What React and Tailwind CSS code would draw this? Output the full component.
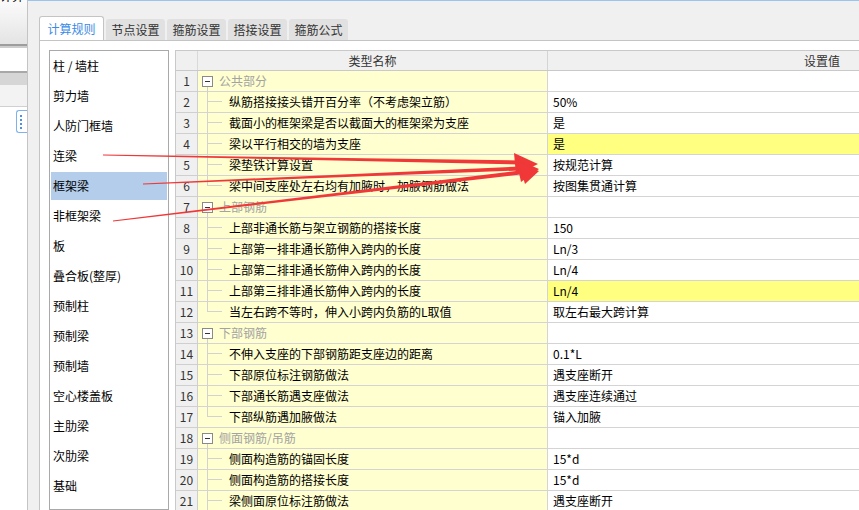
import React from "react";

const font = "font-['Noto_Sans_CJK_SC','Noto_Sans',sans-serif]";

const leftItems = [
  "柱 / 墙柱",
  "剪力墙",
  "人防门框墙",
  "连梁",
  "框架梁",
  "非框架梁",
  "板",
  "叠合板(整厚)",
  "预制柱",
  "预制梁",
  "预制墙",
  "空心楼盖板",
  "主肋梁",
  "次肋梁",
  "基础",
];

const tabs = ["计算规则", "节点设置", "箍筋设置", "搭接设置", "箍筋公式"];

// g = group row, c = child, l = last child of a group
const rows = [
  { n: 1, t: "g", name: "公共部分", value: "" },
  { n: 2, t: "c", name: "纵筋搭接接头错开百分率（不考虑架立筋）", value: "50%" },
  { n: 3, t: "c", name: "截面小的框架梁是否以截面大的框架梁为支座", value: "是" },
  { n: 4, t: "c", name: "梁以平行相交的墙为支座", value: "是", hl: true },
  { n: 5, t: "c", name: "梁垫铁计算设置", value: "按规范计算" },
  { n: 6, t: "l", name: "梁中间支座处左右均有加腋时，加腋钢筋做法", value: "按图集贯通计算" },
  { n: 7, t: "g", name: "上部钢筋", value: "" },
  { n: 8, t: "c", name: "上部非通长筋与架立钢筋的搭接长度", value: "150" },
  { n: 9, t: "c", name: "上部第一排非通长筋伸入跨内的长度", value: "Ln/3" },
  { n: 10, t: "c", name: "上部第二排非通长筋伸入跨内的长度", value: "Ln/4" },
  { n: 11, t: "c", name: "上部第三排非通长筋伸入跨内的长度", value: "Ln/4", hl: true },
  { n: 12, t: "l", name: "当左右跨不等时，伸入小跨内负筋的L取值", value: "取左右最大跨计算" },
  { n: 13, t: "g", name: "下部钢筋", value: "" },
  { n: 14, t: "c", name: "不伸入支座的下部钢筋距支座边的距离", value: "0.1*L" },
  { n: 15, t: "c", name: "下部原位标注钢筋做法", value: "遇支座断开" },
  { n: 16, t: "c", name: "下部通长筋遇支座做法", value: "遇支座连续通过" },
  { n: 17, t: "l", name: "下部纵筋遇加腋做法", value: "锚入加腋" },
  { n: 18, t: "g", name: "侧面钢筋/吊筋", value: "" },
  { n: 19, t: "c", name: "侧面构造筋的锚固长度", value: "15*d" },
  { n: 20, t: "c", name: "侧面构造筋的搭接长度", value: "15*d" },
  { n: 21, t: "c", name: "梁侧面原位标注筋做法", value: "遇支座断开" },
];

function NameCell({ row }) {
  if (row.t === "g") {
    return (
      <div className="flex h-full items-center pl-[4px]">
        <div className="relative flex h-[11px] w-[11px] items-center justify-center border border-[#8a8a8a] bg-white">
          <div className="h-px w-[5px] bg-[#333]" />
          <div className="absolute left-[4px] top-[10px] h-[6px] border-l border-[#cfcfcf]" />
        </div>
        <span className="ml-[6px] text-[#a3a3a3]">{row.name}</span>
      </div>
    );
  }
  return (
    <div className="flex h-full items-stretch">
      <div className="ml-[9px] flex w-[15px] flex-col">
        <div className="h-1/2 border-b border-l border-[#d2d2d2]" />
        <div className={"h-1/2 " + (row.t === "l" ? "" : "border-l border-[#d2d2d2]")} />
      </div>
      <span className="ml-[7px] self-center">{row.name}</span>
    </div>
  );
}

function SideWindow() {
  return (
    <div className="flex w-[27px] shrink-0 flex-col overflow-hidden bg-white">
      <div className="h-[44px] bg-gradient-to-b from-[#fbfbfb] to-[#e4e4e4]">
        <div className="-mt-[12px] whitespace-nowrap text-[12px] leading-[16px] text-black">计算</div>
      </div>
      <div className="h-[2px] bg-[#9d9d9d]" />
      <div className="h-[2px] bg-[#cdcdcd]" />
      <div className="h-[23px] bg-white" />
      <div className="h-[2px] bg-[#a8a8a8]" />
      <div className="h-[12px] bg-[#d6d6d6]" />
      <div className="h-[22px] border-b border-[#d0d0d0] bg-[#f3f3f3]" />
      <div className="flex justify-end pt-[3px]">
        <div className="flex h-[23px] w-[11px] flex-col gap-[2px] rounded-l-[3px] border border-r-0 border-[#7fb1ee] bg-white pl-[3px] pt-[4px]">
          <div className="h-[2px] w-[2px] bg-[#4d8fe0]" />
          <div className="h-[2px] w-[2px] bg-[#4d8fe0]" />
          <div className="h-[2px] w-[2px] bg-[#4d8fe0]" />
          <div className="h-[2px] w-[2px] bg-[#4d8fe0]" />
        </div>
      </div>
    </div>
  );
}

function Arrows() {
  const red = "#f03838";
  return (
    <svg className="pointer-events-none absolute left-0 top-0" width="859" height="510">
      <polygon points="103,154.5 520,160.5 520,164.5 103,155.6" fill={red} />
      <polygon points="514,153 538,164 516,175" fill={red} />
      <polygon points="143,183.4 520,166.5 520,170.5 143,184.6" fill={red} />
      <polygon points="516,159 539,169 521,182" fill={red} />
      <polygon points="113,220.4 520,170.5 520,174.5 113,221.6" fill={red} />
      <polygon points="518,162 539,171 525,184" fill={red} />
    </svg>
  );
}

export default function App() {
  return (
    <div className={"relative flex h-[510px] w-[859px] overflow-hidden bg-white text-[12px] text-black " + font}>
      <SideWindow />
      <div className="flex min-w-0 flex-1 flex-col border-l border-t border-l-[#c4c4c4] border-t-[#9cc3ee] bg-[#f0f0f0] pl-[11px] pt-[15px]">
        <div className="flex h-[24px] items-end gap-[2px]">
          {tabs.map((t, i) =>
            i === 0 ? (
              <div
                key={t}
                className="-mb-px flex h-[25px] w-[65px] items-center justify-center rounded-t-[3px] border border-b-0 border-[#c4c4c4] bg-white text-[#3a8ae6]"
              >
                {t}
              </div>
            ) : (
              <div
                key={t}
                className="flex h-[21px] w-[59px] items-center justify-center rounded-t-[3px] bg-[#e1e1e1] text-[#333]"
              >
                {t}
              </div>
            )
          )}
        </div>
        <div className="flex min-h-0 flex-1 gap-[6px] border-l border-t border-[#c4c4c4] bg-white pl-[9px] pt-[9px]">
          <div className="flex w-[120px] shrink-0 flex-col gap-[2px] border border-[#a9a9a9] bg-white px-px pt-px">
            {leftItems.map((it, i) => (
              <div
                key={it}
                className={"flex h-[28px] shrink-0 items-center pl-[2px] " + (i === 4 ? "bg-[#b4cdeb]" : "")}
              >
                {it}
              </div>
            ))}
          </div>
          <div className="min-w-0 flex-1 overflow-hidden">
            <div className="w-[920px] border-l border-t border-[#c9c9c9]">
              <div className="grid h-[20px] grid-cols-[22px_350px_548px] border-b border-[#c9c9c9] bg-[#f0f0f0] leading-[19px] text-[#333]">
                <div className="border-r border-[#d9d9d9]" />
                <div className="border-r border-[#d4d4d4] text-center">类型名称</div>
                <div className="text-center">设置值</div>
              </div>
              {rows.map((r) => (
                <div key={r.n} className="grid h-[21px] grid-cols-[22px_350px_548px] leading-[20px]">
                  <div className="border-b border-r border-[#cfcfcf] bg-[#f0f0f0] text-center text-[#333]">{r.n}</div>
                  <div className="border-b border-r border-[#d4d4d4] bg-[#ffffcf]">
                    <NameCell row={r} />
                  </div>
                  <div className={"border-b border-[#d4d4d4] pl-[5px] " + (r.hl ? "bg-[#ffff80]" : "bg-white")}>
                    {r.value}
                  </div>
                </div>
              ))}
            </div>
          </div>
        </div>
      </div>
      <Arrows />
    </div>
  );
}
